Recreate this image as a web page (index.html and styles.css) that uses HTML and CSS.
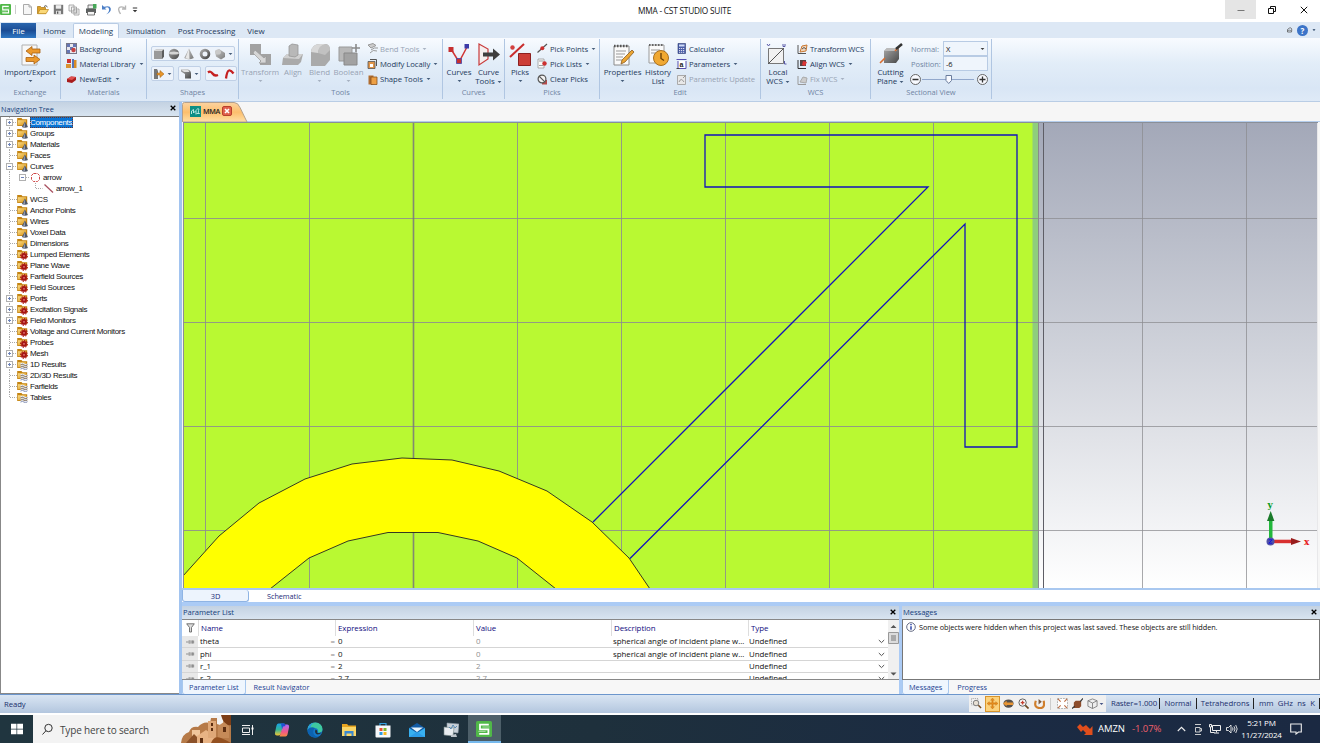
FILE: index.html
```html
<!DOCTYPE html>
<html lang="en">
<head>
<meta charset="utf-8">
<title>MMA - CST STUDIO SUITE</title>
<link rel="stylesheet" href="styles.css">
</head>
<body>
<svg class="defs" width="0" height="0">
  <defs>
    <linearGradient id="gFold" x1="0" y1="0" x2="1" y2="1"><stop offset="0" stop-color="#f9dc8a"/><stop offset="1" stop-color="#d99413"/></linearGradient>
    <linearGradient id="gGray" x1="0" y1="0" x2="1" y2="1"><stop offset="0" stop-color="#cfcfcf"/><stop offset="1" stop-color="#787878"/></linearGradient>
    <linearGradient id="gDark" x1="0" y1="0" x2="1" y2="1"><stop offset="0" stop-color="#a8a8a8"/><stop offset="1" stop-color="#484848"/></linearGradient>
    <linearGradient id="gSky" x1="0" y1="0" x2="0" y2="1"><stop offset="0" stop-color="#a3a8b8"/><stop offset="0.5" stop-color="#d0d3db"/><stop offset="1" stop-color="#ffffff"/></linearGradient>
    <symbol id="tPlus" viewBox="0 0 11 11"><path d="M3.500 0v11M7 5.500h4" stroke="#b0b0b0" stroke-dasharray="1 1"/><rect x=".5" y="2.500" width="6" height="6" fill="#fff" stroke="#b0b0b0"/><path d="M2 5.500h3M3.500 4v3" stroke="#6c82b8"/></symbol>
    <symbol id="tMinus" viewBox="0 0 11 11"><path d="M3.500 0v11M7 5.500h4" stroke="#b0b0b0" stroke-dasharray="1 1"/><rect x=".5" y="2.500" width="6" height="6" fill="#fff" stroke="#b0b0b0"/><path d="M2 5.500h3" stroke="#6c82b8"/></symbol>
    <symbol id="tSub" viewBox="0 0 11 11"><path d="M7 5.500h4" stroke="#b0b0b0" stroke-dasharray="1 1"/><rect x=".5" y="2.500" width="6" height="6" fill="#fff" stroke="#b0b0b0"/><path d="M2 5.500h3" stroke="#6c82b8"/></symbol>
    <symbol id="tMid" viewBox="0 0 11 11"><path d="M3.500 0v11M4 5.500h7" stroke="#a8a8a8" stroke-dasharray="1 1" fill="none"/></symbol>
    <symbol id="tLine" viewBox="0 0 11 11"><path d="M3.500 0v11" stroke="#a8a8a8" stroke-dasharray="1 1"/></symbol>
    <symbol id="tEnd" viewBox="0 0 11 11"><path d="M3.500 0v5.500h7" stroke="#a8a8a8" stroke-dasharray="1 1" fill="none"/></symbol>
    <symbol id="folder" viewBox="0 0 11 11"><path d="M.2 1h4.300l1 1.200h4.700V9H.2z" fill="#c48412"/><path d="M1 3.200h8V8.200H1z" fill="url(#gFold)"/></symbol>
    <symbol id="fCone" viewBox="0 0 11 11"><use href="#folder"/><path d="M7.900 4.500L11 10Q8 11.500 4.800 10z" fill="#4f5868"/><path d="M7.900 5L8 10.500H6z" fill="#949cae"/></symbol>
    <symbol id="fGear" viewBox="0 0 11 11"><use href="#folder"/><circle cx="7" cy="6.900" r="2.900" fill="#a51515"/><circle cx="7" cy="6.900" r="3.400" fill="none" stroke="#b01818" stroke-width="1.100" stroke-dasharray="1.400 1.200"/><circle cx="7" cy="6.900" r=".8" fill="#e88"/></symbol>
    <symbol id="fWave" viewBox="0 0 11 11"><use href="#folder"/><path d="M3.500 5q2-1.500 3.500 0t3.500-.4M3.500 7.200q2-1.500 3.500 0t3.500-.4M3.500 9.300q2-1.500 3.500 0t3.500-.4" fill="none" stroke="#e8ecf8" stroke-width="1.100"/><path d="M3.500 5.900q2-1.500 3.500 0t3.500-.4M3.500 8q2-1.500 3.500 0t3.500-.4M3.500 10.100q2-1.500 3.500 0t3.500-.4" fill="none" stroke="#5a6a98" stroke-width=".7"/></symbol>
    <symbol id="cst" viewBox="0 0 20 20"><rect width="20" height="20" rx="2" fill="#50b848"/><path d="M16 4.500H5v6h10.500v5.500H4" fill="none" stroke="#fff" stroke-width="2.200"/><path d="M17 7.500H8M3 13h9" stroke="#d8f3d4" stroke-width=".8"/></symbol>
    <symbol id="dn" viewBox="0 0 5 4"><path d="M.6 1h3.800L2.500 3.100z" fill="currentColor"/></symbol>
    <symbol id="pin" viewBox="0 0 10 6"><path d="M0 3h3M3.500 1v4M4 2h3v2H4M7.500 1v4M8.500 1.500v3" stroke="#808080" stroke-width=".9" fill="none"/></symbol>
    <symbol id="chev" viewBox="0 0 7 5"><path d="M.8 1l2.700 2.600L6.200 1" fill="none" stroke="#555" stroke-width="1"/></symbol>
  </defs>
</svg>

<header class="titlebar">
  <div class="quick">
    <svg width="11" height="11"><use href="#cst"/></svg>
    <i class="qsep"></i>
    <svg width="11" height="11" viewBox="0 0 11 11"><path d="M1.500.5h5.500l2.500 2.500v7.500h-8z" fill="#f6f6f6" stroke="#aaa"/><path d="M7 .5V3h2.500" fill="none" stroke="#aaa"/></svg>
    <svg width="12" height="11" viewBox="0 0 12 11"><path d="M.5 9.500V2.500h3l1 1h4V9.500z" fill="#dda22c" stroke="#a87410" stroke-width=".7"/><path d="M.7 9.700L3 5.500h8.500L9 9.700z" fill="#fad878" stroke="#b98418" stroke-width=".7"/><path d="M7 2.500q2-2 3.500.5" fill="none" stroke="#444" stroke-width=".9"/></svg>
    <svg width="11" height="11" viewBox="0 0 11 11"><path d="M.8.8h9.400v9.400H.8z" fill="#777"/><path d="M2.800 1.200h5.400v3.500H2.800z" fill="#eee"/><path d="M3 6.800h5v3.400H3z" fill="#ddd"/><path d="M4 7.500h1.300v2.200H4z" fill="#555"/></svg>
    <svg width="12" height="12" viewBox="0 0 12 12" fill="#f6f6f6" stroke="#999" stroke-width=".8"><path d="M1 1h5v6H1zM3.500 3h5v6h-5zM6 5h5v6H6z"/><path d="M7.300 7h2.500M7.300 9h2.500"/></svg>
    <svg width="12" height="12" viewBox="0 0 12 12"><path d="M3 1h6v4H3z" fill="#eee" stroke="#555" stroke-width=".8"/><path d="M1 4.500h10v4.500H1z" fill="#5c6060"/><path d="M2.500 7.500h7V11h-7z" fill="#f4f4f4" stroke="#555" stroke-width=".8"/><path d="M8 0h3.500v4.500H8z" fill="#46a858"/></svg>
    <svg width="11" height="12" viewBox="0 0 11 12"><path d="M1 1v4.500h4.500L3.900 4Q7.500 2 8 5T5 10.500Q10.500 8 9.800 4.500T3 2.800z" fill="#4d80c8"/></svg>
    <svg width="11" height="12" viewBox="0 0 11 12"><path d="M9.500 1.500v3.500H6M9.300 5Q7 2 4 3.200T4.500 10" fill="none" stroke="#b5b5b5" stroke-width="1.400"/></svg>
    <svg width="6" height="6" viewBox="0 0 6 6"><path d="M.8 1h4.400" stroke="#333"/><path d="M.8 3h4.400L3 5.300z" fill="#333"/></svg>
  </div>
  <div class="wtitle">MMA - CST STUDIO SUITE</div>
  <div class="wbtns">
    <span class="min"><svg width="8" height="8"><path d="M.5 4.500h7" stroke="#777"/></svg></span>
    <span><svg width="8" height="8" viewBox="0 0 8 8"><path d="M.5 2.500h5v5h-5zM2.500 2V.5h5v5H6" fill="none" stroke="#111"/></svg></span>
    <span><svg width="8" height="8" viewBox="0 0 8 8"><path d="M.8.8l6.400 6.400M7.200.8L.8 7.200" stroke="#111"/></svg></span>
  </div>
</header>

<nav class="menu">
  <b class="file">File</b><span class="m1">Home</span><span class="m2">Modeling</span><span class="m3">Simulation</span><span class="m4">Post Processing</span><span class="m5">View</span>
  <div class="help">
    <svg width="7" height="6" viewBox="0 0 7 6"><path d="M1.500 5Q.5 2 3.500 1t2 4zM2.300 4l1.200-1.200L4.700 4" fill="none" stroke="#555" stroke-width=".8"/></svg>
    <span class="qm">?</span>
    <svg width="4" height="4"><use href="#dn"/></svg>
  </div>
</nav>

<section class="ribbon">
  <div class="group g1">
    <div class="body">
      <div class="big" style="width:60px"><svg width="24" height="24" viewBox="0 0 24 24"><path d="M4 2h15v20H4z" fill="#f8f8f8" stroke="#b0b0b0"/><path d="M8 8l6-4.500V6h8v4h-8v2.500z" fill="#eb982b" stroke="#a85f10" stroke-width=".8"/><path d="M22 16.500l-6-4.500v2.500H8v4h8V21z" fill="#eb982b" stroke="#a85f10" stroke-width=".8"/></svg><span>Import/Export</span><svg class="ar"><use href="#dn"/></svg></div>
    </div><footer>Exchange</footer>
  </div>
  <div class="group g2">
    <div class="body"><div class="rows">
      <p><svg viewBox="0 0 11 11"><rect x=".5" y=".5" width="10" height="10" fill="#e8e8ee" stroke="#778"/><path d="M1 1h3v3H1zM7 1h3v3H7zM4 4h3v3H4zM1 7h3v3H1z" fill="#6677b4"/><circle cx="7.500" cy="7" r="2.200" fill="#c64141"/></svg>Background</p>
      <p><svg viewBox="0 0 11 11"><path d="M1 1h4v4H1z" fill="#c33"/><path d="M0 6h5v4H0z" fill="#d99232"/><path d="M6 1h2v9H6z" fill="#5874b4"/><path d="M8 2h2.500v8H8z" fill="#d98c24"/></svg>Material Library<svg class="ar"><use href="#dn"/></svg></p>
      <p><svg viewBox="0 0 11 11"><path d="M1 5l4-2.500 5 .5v3L6 9 1 8z" fill="#a81c1c"/><path d="M1 5l4-2.500 5 .5L6 6z" fill="#e05050"/></svg>New/Edit<svg class="ar"><use href="#dn"/></svg></p>
    </div></div><footer>Materials</footer>
  </div>
  <div class="group g3">
    <div class="body shapes">
      <div class="box">
        <svg viewBox="0 0 12 12"><path d="M1 3l2-1.500h8v7L9 11H1z" fill="#9a9a9a"/><path d="M1 3l2-1.500h8L9 3z" fill="#d8d8d8"/><path d="M9 3l2-1.500v7L9 11z" fill="#5c5c5c"/></svg>
        <svg viewBox="0 0 12 12"><circle cx="6" cy="6" r="5.200" fill="url(#gDark)"/><ellipse cx="6" cy="5" rx="5" ry="1.600" fill="#d5d5d5"/></svg>
        <svg viewBox="0 0 12 12"><path d="M6 .5L10.800 10Q6 12.500 1.200 10z" fill="url(#gGray)"/><path d="M6 .5L6.500 11Q3 11 2.500 10z" fill="#e8e8e8"/></svg>
        <svg viewBox="0 0 12 12"><circle cx="6" cy="6" r="3.900" fill="none" stroke="url(#gDark)" stroke-width="2.800"/></svg>
        <svg viewBox="0 0 12 12"><path d="M1 3l4-2 6 4v4l-4 2.500-5-3z" fill="url(#gGray)"/><ellipse cx="4" cy="4" rx="3" ry="2.600" fill="#c9c9c9"/></svg>
        <svg class="ar"><use href="#dn"/></svg>
      </div>
      <div class="line">
        <div class="box"><svg viewBox="0 0 12 12"><path d="M1 1h3l1 2v8H1z" fill="#777"/><path d="M4 5h3V2.500L11 6 7 9.500V7H4z" fill="#e8962b" stroke="#9c5c10" stroke-width=".5"/></svg><svg class="ar"><use href="#dn"/></svg></div>
        <div class="box"><svg viewBox="0 0 12 12"><path d="M1 1.500h7q3 1 3 4v5H5V6L1 3.500z" fill="url(#gDark)"/><path d="M1 1.500h7L9.500 4H4z" fill="#ddd"/></svg><svg class="ar"><use href="#dn"/></svg></div>
        <div class="box"><svg viewBox="0 0 12 12"><path d="M1 4.500q2.500-2 4.500 1t5.500 1.500" fill="none" stroke="#c52020" stroke-width="2.300"/></svg><svg viewBox="0 0 12 12"><path d="M3 10.500Q4 3 6 2.500T10.500 5.500" fill="none" stroke="#c52020" stroke-width="2.300"/></svg></div>
      </div>
    </div><footer>Shapes</footer>
  </div>
  <div class="group g4 dim">
    <div class="body">
      <div class="big" style="width:42px"><svg width="24" height="24" viewBox="0 0 24 24"><path d="M2 1h11v11H2z" fill="#a2a2a2"/><path d="M12 11h11v11H12z" fill="#a2a2a2"/><path d="M7 7l9 8 2-2v7h-7l2-2-8-8z" fill="#d6d6d6" stroke="#999" stroke-width=".7"/></svg><span>Transform</span><svg class="ar"><use href="#dn"/></svg></div>
      <div class="big" style="width:24px"><svg width="24" height="24" viewBox="0 0 24 24"><path d="M2 15l4-4h16l-2 8-3 3H1z" fill="#aaa"/><path d="M2 15l4-4h16l-4 5z" fill="#d0d0d0"/><path d="M8 3l3-2 6 1v10l-3 2-6-1z" fill="#b8b8b8" stroke="#979797" stroke-width=".8"/></svg><span>Align</span></div>
      <div class="big" style="width:29px"><svg width="24" height="24" viewBox="0 0 24 24"><path d="M3 9Q4 1 12 1h6q4 1 4 6v10l-5 6H3z" fill="#aaa"/><path d="M3 9Q4 1 12 1h6Q10 4 10 10z" fill="#d8d8d8"/><path d="M10 10q0-8 8-9 4 1 4 6l-5 5z" fill="#c1c1c1"/></svg><span>Blend</span><svg class="ar"><use href="#dn"/></svg></div>
      <div class="big" style="width:29px"><svg width="24" height="24" viewBox="0 0 24 24"><path d="M2 4h13v14H2z" fill="#b8b8b8" stroke="#9a9a9a"/><path d="M7 10h13v12H7z" fill="#a2a2a2" stroke="#888"/><path d="M19 1v8M15 5h8" stroke="#8a8a8a" stroke-width="1.600"/></svg><span>Boolean</span><svg class="ar"><use href="#dn"/></svg></div>
      <div class="rows">
        <p><svg viewBox="0 0 11 11"><path d="M1 2l5-1.500 3 2L4 5z" fill="#ccc" stroke="#999"/><path d="M4 7q3-3 7-2M3 10q3-4 7-2" fill="none" stroke="#999"/></svg>Bend Tools<svg class="ar"><use href="#dn"/></svg></p>
        <p class="on"><svg viewBox="0 0 11 11"><path d="M1 3.500h7v7H1z" fill="#e0954a" stroke="#555" stroke-width=".8"/><path d="M3 1.500h6.500V8" fill="none" stroke="#555"/><path d="M3 6h3v3H3z" fill="#fff"/></svg>Modify Locally<svg class="ar"><use href="#dn"/></svg></p>
        <p class="on"><svg viewBox="0 0 11 11"><path d="M1.500 1.500h5v9h-5z" fill="#b06d30"/><path d="M4 3h6v7.500H4z" fill="#eda045" stroke="#8c5420" stroke-width=".8"/></svg>Shape Tools<svg class="ar"><use href="#dn"/></svg></p>
      </div>
    </div><footer>Tools</footer>
  </div>
  <div class="group g5">
    <div class="body">
      <div class="big" style="width:30px"><svg width="24" height="24" viewBox="0 0 24 24"><path d="M4 6l8 13L20 4" fill="none" stroke="#d03434" stroke-width="1.500"/><path d="M1.500 4h5v5h-5zM9.500 15.500h5v5h-5z" fill="#c63030"/><path d="M17.500 1h4.500v4.500h-4.500z" fill="#3b3ba8"/><path d="M9.500 15.500h5v5h-5z" fill="none" stroke="#4444a8" stroke-width=".8"/></svg><span>Curves</span><svg class="ar"><use href="#dn"/></svg></div>
      <div class="big" style="width:29px"><svg width="24" height="24" viewBox="0 0 24 24"><path d="M2 1l9 5v10l-9 6z" fill="#f5eeee" stroke="#c83a3a" stroke-width="1.200"/><path d="M6 9.500h10V5.500l7 6-7 6v-4H6z" fill="#3e3e3e"/></svg><span>Curve</span><span>Tools <svg class="ar"><use href="#dn"/></svg></span></div>
    </div><footer>Curves</footer>
  </div>
  <div class="group g6">
    <div class="body">
      <div class="big" style="width:30px"><svg width="24" height="24" viewBox="0 0 24 24"><path d="M2 14L16 1" stroke="#c82c2c" stroke-width="2"/><circle cx="4.500" cy="4.500" r="2.200" fill="#d24040"/><path d="M10.500 10.500h12v12h-12z" fill="#cc3e38" stroke="#8c2020"/></svg><span>Picks</span><svg class="ar"><use href="#dn"/></svg></div>
      <div class="rows">
        <p><svg viewBox="0 0 11 11"><path d="M.5 9.500L10 1" stroke="#555" stroke-width="1.200"/><circle cx="5.300" cy="5.300" r="2" fill="#cc3030"/></svg>Pick Points<svg class="ar"><use href="#dn"/></svg></p>
        <p><svg viewBox="0 0 11 11"><path d="M1 1h6v9H1z" fill="#fafafa" stroke="#999" stroke-width=".8"/><path d="M2 3h4M2 7.500h4" stroke="#888" stroke-width=".8"/><circle cx="7.500" cy="5.500" r="2.200" fill="#cc3030"/></svg>Pick Lists<svg class="ar"><use href="#dn"/></svg></p>
        <p><svg viewBox="0 0 11 11"><path d="M5 6h5v4.500H5z" fill="#b54a4a"/><circle cx="5" cy="5" r="3.900" fill="#f2f2f2" stroke="#555" stroke-width="1.200"/><path d="M2.300 2.300l5.500 5.500" stroke="#555" stroke-width="1.200"/></svg>Clear Picks</p>
      </div>
    </div><footer>Picks</footer>
  </div>
  <div class="group g7">
    <div class="body">
      <div class="big" style="width:45px"><svg width="24" height="24" viewBox="0 0 24 24"><path d="M3 3h15v19H3z" fill="#fafafa" stroke="#8a8a8a"/><path d="M3 3h15" stroke="#555" stroke-width="2.500" stroke-dasharray="1.500 1.500"/><path d="M5 8h10M5 11h9M5 14h7M5 17h6" stroke="#999"/><path d="M21 7l2 2-9 10-4 2 1-4z" fill="#eba634" stroke="#8a5a20" stroke-width=".8"/></svg><span>Properties</span><svg class="ar"><use href="#dn"/></svg></div>
      <div class="big" style="width:26px"><svg width="24" height="24" viewBox="0 0 24 24"><path d="M3 2h15v18H3z" fill="#fafafa" stroke="#9a9a9a"/><path d="M3 2h15" stroke="#666" stroke-width="2" stroke-dasharray="1.500 1.500"/><path d="M5 7h9M5 10h5" stroke="#999"/><circle cx="15" cy="15" r="7.500" fill="#f0a832" stroke="#a87020"/><path d="M15 10v5.500l3 2" fill="none" stroke="#653c08" stroke-width="1.300"/></svg><span>History</span><span>List</span></div>
      <div class="rows">
        <p><svg viewBox="0 0 11 11"><path d="M2 .5h7.500v10H2z" fill="#4a5ea8" stroke="#2c3a74" stroke-width=".6"/><path d="M3 1.500h5.500v2H3z" fill="#d0dcf8"/><path d="M3 5.500h5.500M3 7.500h5.500M3 9.300h5.500" stroke="#dde" stroke-dasharray="1.200 .8"/></svg>Calculator</p>
        <p><svg viewBox="0 0 11 11"><path d="M.5 1.500h10M2 3v7.500h8V3" fill="#fff" stroke="#554fb0"/><path d="M.5 10.500h3" stroke="#444"/><text x="3.500" y="9" class="pa">a</text></svg>Parameters<svg class="ar"><use href="#dn"/></svg></p>
        <p class="off"><svg viewBox="0 0 11 11"><path d="M1.500 1.500h8v9h-8z" fill="#e8e8e8" stroke="#aaa"/><path d="M3 8q2-5 5 0M7 4l3-3" fill="none" stroke="#999"/></svg>Parametric Update</p>
      </div>
    </div><footer>Edit</footer>
  </div>
  <div class="group g8">
    <div class="body">
      <div class="big" style="width:34px"><svg width="24" height="24" viewBox="0 0 24 24"><path d="M2.500 5.500h15v15h-15z" fill="#f2f2f2" stroke="#777"/><path d="M2 21L18 5" stroke="#555"/><path d="M1 1l1.500 2L4 1M17 1v2.500h2V1M18.500 18v3h2" fill="none" stroke="#5858a8"/></svg><span>Local</span><span>WCS <svg class="ar"><use href="#dn"/></svg></span></div>
      <div class="rows">
        <p><svg viewBox="0 0 11 11"><path d="M1 2v8.500h8" fill="none" stroke="#555"/><path d="M3 9L5 3l5-1-1 6z" fill="#f1d6bc" stroke="#c87832"/><path d="M5 6q2-3 4 0" fill="none" stroke="#555"/></svg>Transform WCS</p>
        <p><svg viewBox="0 0 11 11"><path d="M1 2v8.500h8" fill="none" stroke="#333"/><path d="M3 2h6v6H3z" fill="#5c4040"/><path d="M6 3l4 1-2 4-3-1z" fill="#d33"/></svg>Align WCS<svg class="ar"><use href="#dn"/></svg></p>
        <p class="off"><svg viewBox="0 0 11 11"><path d="M1 2v8.500h8" fill="none" stroke="#999"/><path d="M3 8l3-5 4 1-1 5z" fill="#ccc" stroke="#aaa"/></svg>Fix WCS<svg class="ar"><use href="#dn"/></svg></p>
      </div>
    </div><footer>WCS</footer>
  </div>
  <div class="group g9">
    <div class="body">
      <div class="big" style="width:39px"><svg width="24" height="24" viewBox="0 0 24 24"><path d="M5 8l3-3h12v11l-3 4H5z" fill="url(#gDark)"/><path d="M5 8l3-3h12l-3 3z" fill="#bbb"/><path d="M1 20L6 15M16 8l4-4" stroke="#d96e30" stroke-width="1.600"/><path d="M17 6l6-5" stroke="#333" stroke-width="2.500"/></svg><span>Cutting</span><span>Plane <svg class="ar"><use href="#dn"/></svg></span></div>
      <div class="sect">
        <div class="fld"><label>Normal:</label><span class="inp">X<svg class="ar"><use href="#dn"/></svg></span></div>
        <div class="fld"><label>Position:</label><span class="inp">-6</span></div>
        <svg class="slider" width="80" height="13" viewBox="0 0 80 13"><path d="M13 6.500h52" stroke="#92a8cc"/><g fill="#f8faff" stroke="#666"><circle cx="6.500" cy="6.500" r="5"/><circle cx="73.500" cy="6.500" r="5"/><path d="M37 2.500h5.500v5L39.700 10.500 37 7.500z" stroke="#6a7c9c"/></g><path d="M3.500 6.500h6M70.500 6.500h6M73.500 3.500v6" stroke="#333" stroke-width="1.300"/></svg>
      </div>
    </div><footer>Sectional View</footer>
  </div>
</section>

<main class="work">
  <aside class="nav">
    <div class="cap"><span>Navigation Tree</span><svg width="6" height="6" viewBox="0 0 6 6"><path d="M.7.7l4.600 4.600M5.300.7L.7 5.300" stroke="#000" stroke-width="1.300"/></svg></div>
    <div class="tree">
      <p><svg><use href="#tPlus"/></svg><svg><use href="#fCone"/></svg><span class="sel">Components</span></p>
      <p><svg><use href="#tPlus"/></svg><svg><use href="#fCone"/></svg><span>Groups</span></p>
      <p><svg><use href="#tPlus"/></svg><svg><use href="#fCone"/></svg><span>Materials</span></p>
      <p><svg><use href="#tMid"/></svg><svg><use href="#fCone"/></svg><span>Faces</span></p>
      <p><svg><use href="#tMinus"/></svg><svg><use href="#fCone"/></svg><span>Curves</span></p>
      <p><svg class="ind"><use href="#tLine"/></svg><svg><use href="#tSub"/></svg><svg viewBox="0 0 11 11"><path d="M3.500 1.500h4l2 2v4l-2 2h-4l-2-2v-4z" fill="none" stroke="#d04848" stroke-dasharray="3 1"/></svg><span>arrow</span></p>
      <p><svg class="ind"><use href="#tLine"/></svg><svg class="ind"></svg><svg><use href="#tEnd"/></svg><svg viewBox="0 0 11 11"><path d="M1.500 1.500L10 9.500" stroke="#a85060" stroke-width="1.200"/></svg><span>arrow_1</span></p>
      <p><svg><use href="#tMid"/></svg><svg><use href="#fCone"/></svg><span>WCS</span></p>
      <p><svg><use href="#tMid"/></svg><svg><use href="#fCone"/></svg><span>Anchor Points</span></p>
      <p><svg><use href="#tMid"/></svg><svg><use href="#fCone"/></svg><span>Wires</span></p>
      <p><svg><use href="#tMid"/></svg><svg><use href="#fCone"/></svg><span>Voxel Data</span></p>
      <p><svg><use href="#tMid"/></svg><svg><use href="#fCone"/></svg><span>Dimensions</span></p>
      <p><svg><use href="#tMid"/></svg><svg><use href="#fGear"/></svg><span>Lumped Elements</span></p>
      <p><svg><use href="#tMid"/></svg><svg><use href="#fGear"/></svg><span>Plane Wave</span></p>
      <p><svg><use href="#tMid"/></svg><svg><use href="#fGear"/></svg><span>Farfield Sources</span></p>
      <p><svg><use href="#tMid"/></svg><svg><use href="#fGear"/></svg><span>Field Sources</span></p>
      <p><svg><use href="#tPlus"/></svg><svg><use href="#fGear"/></svg><span>Ports</span></p>
      <p><svg><use href="#tPlus"/></svg><svg><use href="#fGear"/></svg><span>Excitation Signals</span></p>
      <p><svg><use href="#tPlus"/></svg><svg><use href="#fGear"/></svg><span>Field Monitors</span></p>
      <p><svg><use href="#tMid"/></svg><svg><use href="#fGear"/></svg><span>Voltage and Current Monitors</span></p>
      <p><svg><use href="#tMid"/></svg><svg><use href="#fGear"/></svg><span>Probes</span></p>
      <p><svg><use href="#tPlus"/></svg><svg><use href="#fGear"/></svg><span>Mesh</span></p>
      <p><svg><use href="#tPlus"/></svg><svg><use href="#fWave"/></svg><span>1D Results</span></p>
      <p><svg><use href="#tMid"/></svg><svg><use href="#fWave"/></svg><span>2D/3D Results</span></p>
      <p><svg><use href="#tMid"/></svg><svg><use href="#fWave"/></svg><span>Farfields</span></p>
      <p><svg><use href="#tEnd"/></svg><svg><use href="#fWave"/></svg><span>Tables</span></p>
    </div>
  </aside>

  <div class="center">
    <div class="doctabs">
      <svg width="66" height="20" viewBox="0 0 66 20"><defs><linearGradient id="gTab" x1="0" y1="0" x2="0" y2="1"><stop offset="0" stop-color="#fbd3a0"/><stop offset=".5" stop-color="#fdbf6d"/><stop offset="1" stop-color="#fee0a8"/></linearGradient></defs><path d="M.5 20V2.500q0-2 2-2H52q4 0 6 5l7 14.500z" fill="url(#gTab)" stroke="#b4a08c"/></svg>
      <div class="tabc"><svg width="11" height="11" viewBox="0 0 11 11"><path d="M0 0h11v11H0z" fill="#0d8f85"/><path d="M1.500 8V5l2-1.500V7L6 4.500V8.500M6.500 3.500q3-2 2 1t1 3h-3" fill="none" stroke="#c8f0ea" stroke-width=".9"/></svg><b>MMA</b><svg width="10" height="10" viewBox="0 0 10 10"><rect x=".5" y=".5" width="9" height="9" rx="1.500" fill="#e0604c" stroke="#b8402c"/><path d="M3 3l4 4M7 3L3 7" stroke="#fff" stroke-width="1.600"/></svg></div>
    </div>
    <svg class="view" width="1135" height="466" viewBox="183 122 1135 466">
      <path d="M183 122h1135v466H183z" fill="url(#gSky)"/>
      <path d="M183 122h850v466H183z" fill="#b9f932"/>
      <path d="M1032.500 122h6v466h-6z" fill="#8fce7c"/>
      <g stroke="#8c8c90" stroke-opacity=".85"><path d="M205.500 122v466M309.500 122v466M517.500 122v466M621.500 122v466M725.500 122v466M829.500 122v466M933.500 122v466M183 218.500h855M183 322.500h855M183 426.500h855M183 530.500h855"/><path d="M413.500 122v466" stroke-width="1.600" stroke="#77777c"/></g>
      <path d="M183 576L219 536 259 503 305 479 352 464 402 458 452 460 499 471 547 491 592 522 629 558 650 589H556L517 558 478 541 438 532.500 388 532.500 348 541 309 558 270 589H183z" fill="#ff0"/>
      <g stroke="#8c8c90" stroke-opacity=".75"><path d="M1142.500 122v466M1246.500 122v466M1038 218.500h280M1038 322.500h280M1038 426.500h280M1038 530.500h280"/></g>
      <path d="M1038.500 122v466" stroke="#8a8a8a"/><path d="M1043.500 122v466" stroke="#5e5e66"/>
      <path d="M183 576L219 536 259 503 305 479 352 464 402 458 452 460 499 471 547 491 592 522 629 558 650 589M270 589L309 558 348 541 388 532.500 438 532.500 478 541 517 558 556 589" fill="none" stroke="#222" stroke-width=".9"/>
      <path d="M593 522L928 187H705V135h312v312h-52V224L630 558.500" fill="none" stroke="#1212bc" stroke-width="1.300"/>
      <path d="M183 122.500h1135M183.500 122v466" stroke="#8a8f98" fill="none"/>
      <path d="M1317.500 123v465" stroke="#e8e8ea"/>
      <g><path d="M1269 520h3.500v19h-3.500z" fill="#22b83c"/><path d="M1267 521l3.700-10 3.700 10z" fill="#1a7a2a"/><path d="M1273 539.700h18v3.500h-18z" fill="#d83030"/><path d="M1291 538l10 3.500-10 3.500z" fill="#981c1c"/><circle cx="1270.500" cy="541.500" r="4" fill="#5050a8"/><path d="M1268.800 539.800h3.400l-3.400 3.400h3.400" fill="none" stroke="#1414dc"/><text x="1267.500" y="508" class="axis" fill="#0a9a1c">y</text><text x="1304" y="545" class="axis" fill="#e81c1c">x</text></g>
    </svg>
    <div class="viewtabs"><span class="act">3D</span><span class="sch">Schematic</span></div>
    <div class="docks">
      <section class="params">
        <div class="cap"><span>Parameter List</span><svg width="6" height="6" viewBox="0 0 6 6"><path d="M.7.7l4.600 4.600M5.300.7L.7 5.300" stroke="#000" stroke-width="1.300"/></svg></div>
        <div class="tablewrap">
          <div class="table">
            <div class="tr th"><i><svg width="9" height="10" viewBox="0 0 9 10"><path d="M.7.8h7.600L5.500 4.500V9h-2V4.500z" fill="#ddd" stroke="#666" stroke-width=".9"/></svg></i><span>Name</span><span>Expression</span><span>Value</span><span>Description</span><span>Type</span></div>
            <div class="tr"><i><svg width="9" height="6"><use href="#pin"/></svg></i><span>theta<em>=</em></span><span>0</span><span class="v">0</span><span>spherical angle of incident plane w...</span><span>Undefined<svg width="7" height="5"><use href="#chev"/></svg></span></div>
            <div class="tr"><i><svg width="9" height="6"><use href="#pin"/></svg></i><span>phi<em>=</em></span><span>0</span><span class="v">0</span><span>spherical angle of incident plane w...</span><span>Undefined<svg width="7" height="5"><use href="#chev"/></svg></span></div>
            <div class="tr"><i><svg width="9" height="6"><use href="#pin"/></svg></i><span>r_1<em>=</em></span><span>2</span><span class="v">2</span><span></span><span>Undefined<svg width="7" height="5"><use href="#chev"/></svg></span></div>
            <div class="tr"><i><svg width="9" height="6"><use href="#pin"/></svg></i><span>r_2<em>=</em></span><span>2.7</span><span class="v">2.7</span><span></span><span>Undefined<svg width="7" height="5"><use href="#chev"/></svg></span></div>
          </div>
          <svg width="11" height="60" viewBox="0 0 11 60"><path d="M0 0h11v60H0z" fill="#f0f0f0"/><path d="M2.500 8l3-3 3 3zM2.500 52.500h6l-3 3z" fill="#555"/><path d="M.5 12.500h10v11H.5z" fill="#dcdcdc" stroke="#999"/><path d="M3 16h5M3 18h5M3 20h5" stroke="#777"/></svg>
        </div>
        <div class="ptabs"><span class="act">Parameter List</span><span>Result Navigator</span></div>
      </section>
      <section class="msgs">
        <div class="cap"><span>Messages</span><svg width="6" height="6" viewBox="0 0 6 6"><path d="M.7.7l4.600 4.600M5.300.7L.7 5.300" stroke="#000" stroke-width="1.300"/></svg></div>
        <div class="mbody"><svg width="10" height="10" viewBox="0 0 10 10"><circle cx="5" cy="5" r="4.300" fill="#fff" stroke="#555c78" stroke-width=".9"/><path d="M5 4.200v3.500M5 2v1.300" stroke="#2038a0" stroke-width="1.400"/></svg><span>Some objects were hidden when this project was last saved. These objects are still hidden.</span></div>
        <div class="ptabs"><span class="act">Messages</span><span>Progress</span></div>
      </section>
    </div>
  </div>
</main>

<footer class="status">
  <span class="ready">Ready</span>
  <div class="tools">
    <span><svg viewBox="0 0 12 12"><path d="M.5.5h7v7h-7z" fill="none" stroke="#999" stroke-dasharray="1 1"/><circle cx="5.500" cy="5.500" r="3" fill="#e8e0d4" stroke="#777"/><path d="M8 8l3 3" stroke="#704820" stroke-width="1.600"/></svg></span>
    <span class="hot"><svg viewBox="0 0 12 12"><path d="M6 0l2 2.500H6.700v2.800h2.800V4L12 6 9.500 8V6.700H6.700v2.800H8L6 12 4 9.500h1.300V6.700H2.500V8L0 6l2.500-2v1.300h2.800V2.500H4z" fill="#e88d1c" stroke="#b96a10" stroke-width=".4"/></svg></span>
    <span><svg viewBox="0 0 12 12"><ellipse cx="6" cy="6" rx="5.500" ry="4.500" fill="#55504c"/><path d="M0 6l4-3v2h7v2.500H4V9z" fill="#e89534"/></svg></span>
    <span><svg viewBox="0 0 12 12"><circle cx="5" cy="5" r="4" fill="#fafafa" stroke="#555"/><path d="M3 5h4M5 3v4" stroke="#c34030" stroke-width="1.500"/><path d="M8 8l3.500 3.500" stroke="#704820" stroke-width="1.800"/></svg></span>
    <span><svg viewBox="0 0 12 12"><path d="M2 3q-2.500 7.500 4 8t4.500-8" fill="none" stroke="#cf7e2c" stroke-width="2.400"/><path d="M5 1l3.500 3L5 7z" fill="#7a5a40"/></svg></span>
    <i></i>
    <span><svg viewBox="0 0 12 12"><path d="M.5.5h11v11H.5z" fill="#fff" stroke="#aaa" stroke-dasharray="2 1"/><path d="M1 1l3 3M11 1L8 4M1 11l3-3M11 11L8 8" stroke="#bd7048" stroke-width="1.300"/></svg></span>
    <span><svg viewBox="0 0 12 12"><path d="M2 5l2-2h6v6l-2 2H2z" fill="#8d4d2c"/><path d="M0 11.500L3 9M9 4l3-3.500" stroke="#333" stroke-width="1.300"/></svg></span>
    <span class="cube"><svg viewBox="0 0 12 12"><path d="M1 3l5-2 5 2v6l-5 2.500L1 9zM1 3l5 2.500L11 3M6 5.500v6" fill="#eee" stroke="#777" stroke-width=".9"/></svg><svg class="ar"><use href="#dn"/></svg></span>
  </div>
  <span class="s1">Raster=1.000</span><span class="s2">Normal</span><span class="s3">Tetrahedrons</span><span class="s4"><b>mm</b><b>GHz</b><b>ns</b><b>K</b></span>
</footer>

<div class="taskbar">
  <div class="start"><svg width="12" height="12" viewBox="0 0 12 12"><path d="M0 .8h5.500v4.900H0zM6.200.8H12v4.900H6.200zM0 6.400h5.500v4.900H0zM6.200 6.400H12v4.900H6.200z" fill="#fff"/></svg></div>
  <div class="search"><svg width="13" height="13" viewBox="0 0 13 13"><circle cx="7.500" cy="5" r="3.700" fill="none" stroke="#333"/><path d="M5 7.700L1.500 11.500" stroke="#333"/></svg><span>Type here to search</span>
    <svg class="art" width="50" height="28" viewBox="0 0 50 28"><path d="M0 28q1-9 8-11 2-6 9-5 5-6 12-4l1-5h6v6l6 2 1-11h7v28z" fill="#b67a48"/><path d="M40 0h10v10q-7 2-10-10z" fill="#7c3d16"/><path d="M11 15h8v13h-8z" fill="#f0c69c"/><path d="M5 28l8-9 9 9z" fill="#8c5229"/><path d="M16 21l9-6 9 6v7H16z" fill="#e8b384"/><path d="M27 6h8v17h-8z" fill="#dfa878"/><path d="M30 8h2v3h-2zM30 13h2v3h-2z" fill="#5c2d10"/><path d="M37 11l6-4 5 4v12H37z" fill="#c58a58"/><path d="M42 12h3v5h-3zM19 23h3v5h-3z" fill="#5c2d10"/><path d="M30 28q3-8 10-5t10 5z" fill="#935020"/></svg>
  </div>
  <div class="apps">
    <span><svg viewBox="0 0 16 16"><path d="M2 3.500h8M2 12.500h8M2.500 6v4.500h7V6zM12.500 3v10" fill="none" stroke="#eee"/><path d="M11.500 6.500h2" stroke="#fff" stroke-width="2"/></svg></span>
    <span><svg viewBox="0 0 16 16"><defs><linearGradient id="c1" x1="0" y1="0" x2="0" y2="1"><stop stop-color="#18a0e8"/><stop offset=".5" stop-color="#32b59a"/><stop offset="1" stop-color="#f6c330"/></linearGradient><linearGradient id="c2" x1="0" y1="0" x2="0" y2="1"><stop stop-color="#a868f8"/><stop offset=".6" stop-color="#f0588c"/><stop offset="1" stop-color="#f88840"/></linearGradient></defs><path d="M4.500 1.500h6L7 11.500q-.6 2-2.500 2H3q-2.500 0-2-3l1.500-7q.5-2 2-2z" fill="url(#c1)"/><path d="M11.500 14.500h-6L9 4.500q.6-2 2.500-2H13q2.500 0 2 3l-1.500 7q-.5 2-2 2z" fill="url(#c2)"/><path d="M7 1.500h3.500L11.500 4 9 4.500 8 7z" fill="#2050d0"/></svg></span>
    <span><svg viewBox="0 0 16 16"><circle cx="8" cy="8" r="7.500" fill="#1578c8"/><path d="M.5 8Q1 .5 8.500.5q6.500.5 7 6.500 0 4-4.500 3.500 1-4-3-4.500Q4 5.500.5 8z" fill="#3ec8a0"/><path d="M.5 7.500Q1 1.500 7 .7 3 3 4 6 2 6 .5 7.500z" fill="#2aa0dc"/><path d="M.5 7.500Q4 4 8 6q-3 3-1 6.500 2 3 6 1.500-4 3-9 .5-4-3-3.500-7z" fill="#0c62b0"/><path d="M8.500 7.500q2.500 1 1.500 3 2.500 1.500 4.800-.5-1.500 2.500-4.500 2.500Q7 11 8.500 7.500z" fill="#20303c"/></svg></span>
    <span><svg viewBox="0 0 16 16"><path d="M1 2h5l1.500 1.500H15V14H1z" fill="#e8a520"/><path d="M1 5h14v9H1z" fill="#fad668"/><path d="M3.500 9h9v5h-2v-2.500h-5V14h-2z" fill="#3b88d0"/></svg></span>
    <span><svg viewBox="0 0 16 16"><path d="M5 4V1.500h6V4" fill="none" stroke="#32a0e0" stroke-width="1.200"/><path d="M.5 3.500h15v11q0 1-1 1h-13q-1 0-1-1z" fill="#f6f8fa"/><path d="M4.500 6h3v3h-3z" fill="#e85030"/><path d="M8.500 6h3v3h-3z" fill="#7cb830"/><path d="M4.500 10h3v3h-3z" fill="#2c9ce0"/><path d="M8.500 10h3v3h-3z" fill="#f6b820"/></svg></span>
    <span><svg viewBox="0 0 16 16"><path d="M0 6l8-5 8 5v9H0z" fill="#125ba4"/><path d="M2 5.500h12L8 10z" fill="#e8f4fc"/><path d="M0 6l8 5 8-5v9H0z" fill="#38b0f0"/><path d="M0 15l8-5 8 5z" fill="#2c9ce8"/></svg></span>
    <span><svg viewBox="0 0 16 16"><path d="M4 1l12 1-1 9-11-1z" fill="#c8d0d8" stroke="#8a98a4" stroke-width=".6"/><path d="M1 5l10 1-1 8-9-1z" fill="#e8ecf0" stroke="#788" stroke-width=".6"/><path d="M6 5l2 2 2-4 2 3 2-2" fill="none" stroke="#3c78a8" stroke-width=".8"/><path d="M8 13l5-1 1 3H8z" fill="#bcc4ca"/></svg></span>
    <span class="run"><svg viewBox="0 0 20 20"><use href="#cst"/></svg></span>
  </div>
  <div class="tray">
    <svg width="17" height="12" viewBox="0 0 17 12"><path d="M0 4l3-3 3 3 3-2 4 4 2.500-3v9H7l2-2-3-3-2 2z" fill="#e04e1c"/></svg>
    <span class="amzn">AMZN</span><span class="pct">-1.07%</span>
    <svg width="9" height="6" viewBox="0 0 9 6"><path d="M.8 5l3.700-3.700L8.200 5" fill="none" stroke="#eee" stroke-width="1.100"/></svg>
    <svg class="cup" width="9" height="13" viewBox="0 0 9 13"><path d="M1 1.500h6M1.500 4.500h4.500v4.500h-4.500zM6 5.500h1.500v2.500H6M1 11.500h6" fill="none" stroke="#ddd" stroke-width=".9"/></svg>
    <svg class="net" width="12" height="10" viewBox="0 0 12 10"><path d="M3.500 1.500h8v5h-8zM.5 .5h2v2.500h-2zM1.500 3v5.500h4M7.500 6.500v2M5 9h5" fill="none" stroke="#eee"/></svg>
    <svg class="vol" width="12" height="10" viewBox="0 0 12 10"><path d="M.5 3.500h2L5 1v8L2.500 6.500h-2zM6.500 3.500q1 1.500 0 3M8 2.300q2 2.700 0 5.400M9.700 1q3 4 0 8" fill="none" stroke="#eee" stroke-width=".9"/></svg>
    <div class="clock"><span>5:21 PM</span><span>11/27/2024</span></div>
    <svg class="note" width="12" height="12" viewBox="0 0 12 12"><path d="M.7 1h10.600v8H8.500L6 11V9H.7z" fill="none" stroke="#eee" stroke-width="1.100"/></svg>
  </div>
</div>
</body>
</html>
```
FILE: styles.css
```css
* { box-sizing: border-box; }
html, body { margin: 0; width: 1320px; height: 743px; overflow: hidden; }
body { display: flex; flex-direction: column; background: #fff; color: #1e395b; font: 7.5px/10px "Open Sans", "Noto Sans", sans-serif; letter-spacing: -0.05px; white-space: nowrap; }
p { margin: 0; }
svg { display: block; flex: none; }
.defs { height: 0; }
.ar { width: 5px; height: 4px; opacity: .8; }

/* title bar */
.titlebar { height: 22px; flex: none; display: flex; background: #fff; }
.quick { width: 240px; height: 19px; display: flex; align-items: center; gap: 4.3px; flex: none; }
.qsep { width: 1px; height: 9px; background: #ccc; margin: 0 1px 0 0; }
.wtitle { flex: 1; padding-left: 398px; font-size: 8.3px; color: #111; line-height: 21px; letter-spacing: -0.22px; }
.wbtns { display: flex; justify-content: flex-end; flex: none; }
.wbtns span { width: 31px; height: 19px; display: flex; align-items: center; justify-content: center; }
.wbtns .min { background: #e5e5e5; }
.wbtns span:last-child { width: 33px; }

/* ribbon tabs */
.menu { height: 16px; flex: none; display: flex; align-items: flex-end; background: #dde8f5; font-size: 8px; line-height: 15px; text-align: center; }
.file { width: 35px; height: 15px; margin-left: 1px; background: linear-gradient(#2a66ae, #1b4c94 50%, #2f78c4); color: #fff; font-weight: 400; }
.m1 { width: 37px; }
.m2 { width: 46px; background: #fafcff; border: 1px solid #b8cbe4; border-bottom: 0; border-radius: 2px 2px 0 0; height: 15px; line-height: 14px; }
.m3 { width: 54px; }
.m4 { width: 67px; }
.m5 { width: 32px; }
.help { margin-left: auto; width: 34px; height: 16px; display: flex; align-items: center; gap: 4px; }
.qm { width: 11px; height: 11px; border-radius: 6px; background: #3c74c8; color: #fff; font-weight: 700; line-height: 11px; }

/* ribbon */
.ribbon { height: 64px; flex: none; display: flex; background: linear-gradient(#f8fbff, #e2edf8 40%, #d9e6f5 80%, #dfeaf7); border-bottom: 1px solid #b9cde5; }
.group { height: 60px; margin-top: 1px; border-right: 1px solid #b0c6e2; display: flex; flex-direction: column; flex: none; }
.g1 { width: 61px; } .g2 { width: 86px; } .g3 { width: 92px; } .g4 { width: 204px; } .g5 { width: 62px; }
.g6 { width: 95px; } .g7 { width: 161px; } .g8 { width: 110px; } .g9 { width: 121px; }
.group .body { height: 48px; display: flex; padding-top: 2px; }
.group footer { text-align: center; color: #7185a3; line-height: 11px; }
.big { display: flex; flex-direction: column; align-items: center; padding-top: 2px; flex: none; }
.big span { display: flex; align-items: center; gap: 2px; line-height: 9px; font-size: 7.9px; }
.big > svg + span { padding-top: 1px; }
.big > .ar { margin-top: 2px; }
.rows { display: flex; flex-direction: column; padding-left: 5px; }
.rows p { height: 15.3px; display: flex; align-items: center; gap: 3px; font-size: 7.7px; }
.rows p > svg:first-child { width: 11px; height: 11px; margin-right: -1px; }
.g2 .rows p { gap: 3.4px; }
.g4 .rows { padding-left: 4px; }
.g5 .body { padding-left: 1px; }
.g6 .rows { padding-left: 2px; }
.g8 .rows { padding-left: 2px; }
.g8 .rows p { letter-spacing: -0.12px; }
.dim { color: #98a3b4; }
.dim .on { color: #1e395b; }
.rows .off { color: #98a3b4; letter-spacing: -0.1px; }
.pa { font: 700 7px "Liberation Sans", sans-serif; fill: #222; }
.group .shapes { flex-direction: column; gap: 5px; padding: 7px 0 0 4px; align-items: flex-start; }
.box { height: 15px; display: flex; align-items: center; gap: 3.2px; border: 1px solid #c0d0e6; border-radius: 2px; padding: 0 1px; background: #edf3fb; }
.box svg:not(.ar) { width: 12px; height: 12px; }
.box .ar { margin-left: -1px; }
.line { display: flex; gap: 4px; }
.sect { width: 78px; padding-left: 1px; display: flex; flex-direction: column; }
.fld { display: flex; justify-content: space-between; height: 15.3px; align-items: center; color: #7185a3; }
.inp { width: 45px; height: 15px; border: 1px solid #b8cbe4; background: #eff5fc; color: #111; display: flex; align-items: center; justify-content: space-between; padding: 0 2px; }
.slider { margin-left: -2px; margin-top: 1px; }

/* workspace */
.work { height: 592px; flex: none; display: flex; background: #f6f6f6; }
.cap { height: 13px; flex: none; display: flex; justify-content: space-between; align-items: center; padding: 0 3px 0 1px; background: linear-gradient(#c4d2e2, #d8e4f0); color: #14407c; font-size: 7.6px; }
.cap span { margin-top: -2px; }
.cap svg { margin-top: -2px; }
.nav { width: 179px; flex: none; display: flex; flex-direction: column; background: #fff; border-bottom: 1px solid #888; }
.nav .cap { height: 14px; font-size: 7.3px; }
.nav .cap span { margin-top: 0; }
.tree { flex: 1; border-top: 1px solid #777; border-left: 1px solid #888; padding: 0 0 0 5px; font: 8px/11px "Liberation Sans", sans-serif; letter-spacing: -0.33px; color: #111; }
.tree p { height: 11px; display: flex; align-items: center; }
.tree p svg { width: 11px; height: 11px; }
.tree p span { margin-left: 2px; padding-right: 1px; }
.tree .ind { margin-right: 2px; }
.tree .sel { background: #0a74d4; color: #fff; outline: 1px dotted #633; outline-offset: -1px; }
.center { flex: 1; display: flex; flex-direction: column; border-left: 3px solid #a2c4f0; min-width: 0; }
.doctabs { height: 20px; flex: none; display: grid; border-bottom: 1px solid #b4cdec; }
.doctabs > * { grid-area: 1 / 1; }
.tabc { display: flex; align-items: center; gap: 2px; padding: 0 0 1px 8px; height: 19px; color: #222; }
.tabc b { font-weight: 600; font-size: 7.2px; letter-spacing: -0.4px; margin-right: 0; }
.view { margin-left: 1px; }
.axis { font: 700 9px "DejaVu Serif", serif; }
.viewtabs { height: 14px; border-top: 2px solid #a9c8f0; display: flex; background: #fff; line-height: 12px; color: #1c2c78; text-align: center; flex: none; }
.viewtabs .act { width: 67px; background: #edf4fd; border: 1px solid #8fb4e4; border-top: 0; border-radius: 0 3px 3px 3px; }
.sch { margin-left: 18px; font-size: 7.3px; }
.docks { border-top: 4px solid #abcbf5; height: 92px; flex: none; display: flex; background: #abcbf5; gap: 3px; }
.params { width: 717px; display: flex; flex-direction: column; background: #f7f7f7; }
.tablewrap { height: 61px; display: flex; border-top: 1px solid #888; border-bottom: 1px solid #888; background: #fff; overflow: hidden; flex: none; }
.table { width: 706px; flex: none; color: #111; font-size: 7.9px; }
.tr { display: grid; grid-template-columns: 16px 137px 138px 138px 137px 140px; height: 12.4px; line-height: 11px; border-bottom: 1px solid #d5d5d5; }
.tr > span { padding-left: 3px; display: flex; justify-content: space-between; align-items: center; padding-right: 3px; }
.tr > span:nth-child(5), .tr > span:nth-child(2) { padding-left: 2px; }
.tr > span:last-child { padding-left: 1px; }
.tr i { background: #e8e8e8; display: flex; align-items: center; justify-content: center; }
.tr em { font-style: normal; color: #888; margin-right: -3px; }
.tr .v { color: #909090; }
.th { height: 16px; color: #100c80; border-bottom: 0; }
.tr.th > span { border-left: 1px solid #ddd; padding-left: 2px; }
.th i { background: #fff; }
.ptabs { display: flex; flex: 1; line-height: 14px; color: #1b3f94; background: #f7f7f7; font-size: 7.4px; }
.ptabs span { padding: 0 8px; }
.ptabs .act { background: #eff6fe; border: 1px solid #a8c8ee; border-top: 0; border-radius: 0 0 3px 3px; padding: 0 6px; margin-bottom: 1px; }
.msgs { flex: 1; display: flex; flex-direction: column; min-width: 0; }
.mbody { height: 61px; border: 1px solid #777; background: #fff; display: flex; gap: 3px; padding: 2px 3px; line-height: 10px; color: #111; font-size: 7.3px; letter-spacing: -0.08px; flex: none; }

/* status bar */
.status { height: 19px; flex: none; border-top: 1px solid #6c96cc; background: linear-gradient(#d9e5f3, #b3c6de); display: flex; align-items: center; color: #1b2f6c; padding-bottom: 1px; }
.ready { margin-left: 4px; font-size: 7.7px; margin-right: auto; }
.tools { height: 17px; width: 137px; display: flex; align-items: center; background: #f0f0f0; }
.tools span { width: 15.7px; height: 16px; display: flex; align-items: center; justify-content: center; }
.tools span svg:first-child { width: 11px; height: 11px; }
.tools .hot { background: #fcd27c; border: 1px solid #d8952c; }
.tools .cube { width: 20px; gap: 1px; }
.tools i { width: 1px; height: 12px; background: #ccc; margin: 0 3px; }
.s1, .s2, .s3 { border-right: 1px solid #222; height: 11px; line-height: 11px; text-align: center; font-size: 7.8px; }
.s1 { width: 54px; padding-left: 3px; letter-spacing: -0.12px; } .s2 { width: 37px; } .s3 { width: 57px; }
.s4 { width: 66px; display: flex; gap: 4.5px; padding-left: 5px; font-size: 7.8px; border-right: 1px solid #222; line-height: 11px; }
.s4 b { font-weight: 400; }

/* taskbar */
.taskbar { height: 28px; margin-top: 2px; flex: none; display: flex; background: linear-gradient(90deg, #20353f, #1e303c 45%, #1b2b43 75%, #1b2942); color: #fff; align-items: center; }
.start { width: 33px; display: flex; justify-content: center; }
.search { width: 198px; height: 28px; background: #f3f3f3; display: flex; align-items: center; color: #444; font-size: 10px; padding-left: 8px; gap: 6px; letter-spacing: -0.16px; }
.search span { padding-top: 1px; }
.art { margin-left: auto; }
.apps { display: flex; height: 28px; }
.apps span { width: 33.8px; display: flex; align-items: center; justify-content: center; padding-top: 1px; }
.apps svg { width: 16px; height: 16px; }
.apps .run { background: #4d5f69; border-bottom: 2px solid #76b9ed; }
.tray { margin-left: auto; width: 243px; height: 28px; display: flex; align-items: center; font-size: 9.5px; }
.amzn { margin-left: 4px; width: 34px; }
.pct { color: #f0606c; width: 45px; }
.cup { margin-left: 8px; } .net { margin-left: 6px; } .vol { margin-left: 5px; }
.clock { width: 47px; display: flex; flex-direction: column; align-items: center; line-height: 12px; font-size: 8px; letter-spacing: -0.22px; }
.note { margin-left: 5px; }
```
